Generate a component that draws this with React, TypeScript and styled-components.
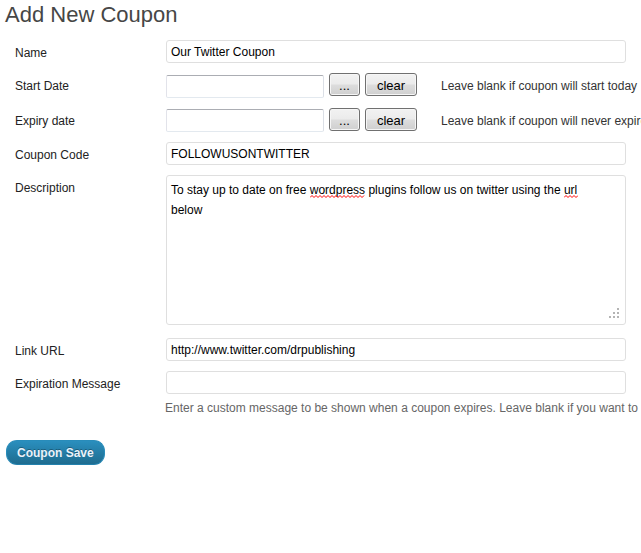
import React, { useState } from "react";
import styled, { createGlobalStyle, css } from "styled-components";

const GlobalStyle = createGlobalStyle`
  body {
    margin: 0;
    background: #fff;
    color: #333;
    font: 12px/20px "Liberation Sans", Arial, sans-serif;
    overflow-x: hidden;
  }
  * { box-sizing: border-box; }
`;

const Page = styled.main`
  padding: 2px 0 0 5px;
  overflow: hidden;
`;

const Title = styled.h1`
  margin: 0 0 12px;
  font-size: 22px;
  line-height: 26px;
  font-weight: 400;
  color: #464646;
`;

const Fields = styled.div`
  display: grid;
  grid-template-columns: 151px minmax(0, 1fr);
  grid-template-rows: auto minmax(25px, auto) minmax(24px, auto);
  row-gap: 10px;
  padding: 0 15px 0 10px;
`;

const Label = styled.label`
  padding-top: 3px;
  line-height: 20px;
  align-self: start;
  color: #222;
`;

const fieldBox = css`
  display: block;
  margin: 0;
  border: 1px solid #dfdfdf;
  border-radius: 3px;
  background: #fff;
  color: #000;
  font: inherit;
  outline: none;
`;

const TextInput = styled.input`
  ${fieldBox}
  width: 100%;
  height: 23px;
  padding: 0 4px;
`;

const DateInput = styled(TextInput)`
  flex: none;
  width: 158px;
  border-color: #abadb3 #dbdfe6 #e3e9ef #e2e3ea;
  border-radius: 2px;
  align-self: flex-end;
`;

const DateGroup = styled.div`
  display: flex;
  align-items: flex-start;
  gap: 5px;
`;

const SmallButton = styled.button<{ $wide?: boolean }>`
  flex: none;
  width: ${(p) => (p.$wide ? 52 : 31)}px;
  height: 23px;
  padding: 3px 0 0;
  border: 1px solid #707070;
  border-radius: 3px;
  background: linear-gradient(#f2f2f2, #ebebeb 48%, #dddddd 52%, #cfcfcf);
  box-shadow: inset 0 0 0 1px #f6f6f6;
  color: #000;
  font: 13px/18px "Liberation Sans", Arial, sans-serif;
`;

const DateNote = styled.span`
  padding: 3px 0 0 19px;
  line-height: 20px;
  white-space: nowrap;
`;

const AreaWrap = styled.div`
  position: relative;
  padding-bottom: 3px;
`;

const TextArea = styled.textarea`
  ${fieldBox}
  width: 100%;
  height: 150px;
  padding: 4px 20px 4px 4px;
  resize: none;
`;

const SpellMark = styled.svg<{ $left: number }>`
  position: absolute;
  left: ${(p) => p.$left}px;
  top: 20px;
  pointer-events: none;
`;

const Grip = styled.svg`
  position: absolute;
  right: 6px;
  bottom: 9px;
  pointer-events: none;
`;

const Hint = styled.div`
  margin: 4px 0 0 -1px;
  color: #666;
  white-space: nowrap;
`;

const SaveButton = styled.button`
  display: block;
  height: 25px;
  margin: 22px 0 0 1px;
  padding: 0 10px;
  border: 1px solid #298cba;
  border-bottom-color: #2381ad;
  border-radius: 11px;
  background: linear-gradient(#2a8fbe, #21759b 75%, #1f6c90);
  color: #eaf2fa;
  font: bold 12px/20px "Liberation Sans", Arial, sans-serif;
  text-shadow: 0 -1px 0 rgba(0, 0, 0, 0.3);
`;

/* Red zigzag drawn under a word the spell checker does not know. */
function Squiggle({ left, width }: { left: number; width: number }) {
  let d = "M0 2.5";
  for (let x = 2; x <= width; x += 2) d += `L${x} ${x % 4 === 2 ? 0.5 : 2.5}`;
  return (
    <SpellMark $left={left} width={width} height="3" aria-hidden="true">
      <path d={d} fill="none" stroke="#f00" strokeWidth="1" />
    </SpellMark>
  );
}

function DateField({ id, label, note }: { id: string; label: string; note: string }) {
  const [value, setValue] = useState("");
  return (
    <>
      <Label htmlFor={id}>{label}</Label>
      <DateGroup>
        <DateInput id={id} value={value} onChange={(e) => setValue(e.target.value)} />
        <SmallButton type="button">...</SmallButton>
        <SmallButton type="button" $wide onClick={() => setValue("")}>clear</SmallButton>
        <DateNote>{note}</DateNote>
      </DateGroup>
    </>
  );
}

export default function App() {
  return (
    <>
      <GlobalStyle />
      <Page>
        <Title>Add New Coupon</Title>
        <form onSubmit={(e) => e.preventDefault()}>
          <Fields>
            <Label htmlFor="name">Name</Label>
            <TextInput id="name" defaultValue="Our Twitter Coupon" />
            <DateField id="start" label="Start Date" note="Leave blank if coupon will start today" />
            <DateField id="expiry" label="Expiry date" note="Leave blank if coupon will never expire" />
            <Label htmlFor="code">Coupon Code</Label>
            <TextInput id="code" defaultValue="FOLLOWUSONTWITTER" />
            <Label htmlFor="description">Description</Label>
            <AreaWrap>
              <TextArea
                id="description"
                spellCheck={false}
                defaultValue="To stay up to date on free wordpress plugins follow us on twitter using the url below"
              />
              <Squiggle left={144} width={55} />
              <Squiggle left={398} width={14} />
              <Grip width="11" height="11" fill="#b4b4b4" aria-hidden="true">
                <path d="M8 0h2v2h-2zM4 4h2v2h-2zM8 4h2v2h-2zM0 8h2v2h-2zM4 8h2v2h-2zM8 8h2v2h-2z" />
              </Grip>
            </AreaWrap>
            <Label htmlFor="link">Link URL</Label>
            <TextInput id="link" defaultValue="http://www.twitter.com/drpublishing" />
            <Label htmlFor="message">Expiration Message</Label>
            <div>
              <TextInput id="message" aria-describedby="message-hint" />
              <Hint id="message-hint">
                Enter a custom message to be shown when a coupon expires. Leave blank if you want to
              </Hint>
            </div>
          </Fields>
          <SaveButton type="submit">Coupon Save</SaveButton>
        </form>
      </Page>
    </>
  );
}
